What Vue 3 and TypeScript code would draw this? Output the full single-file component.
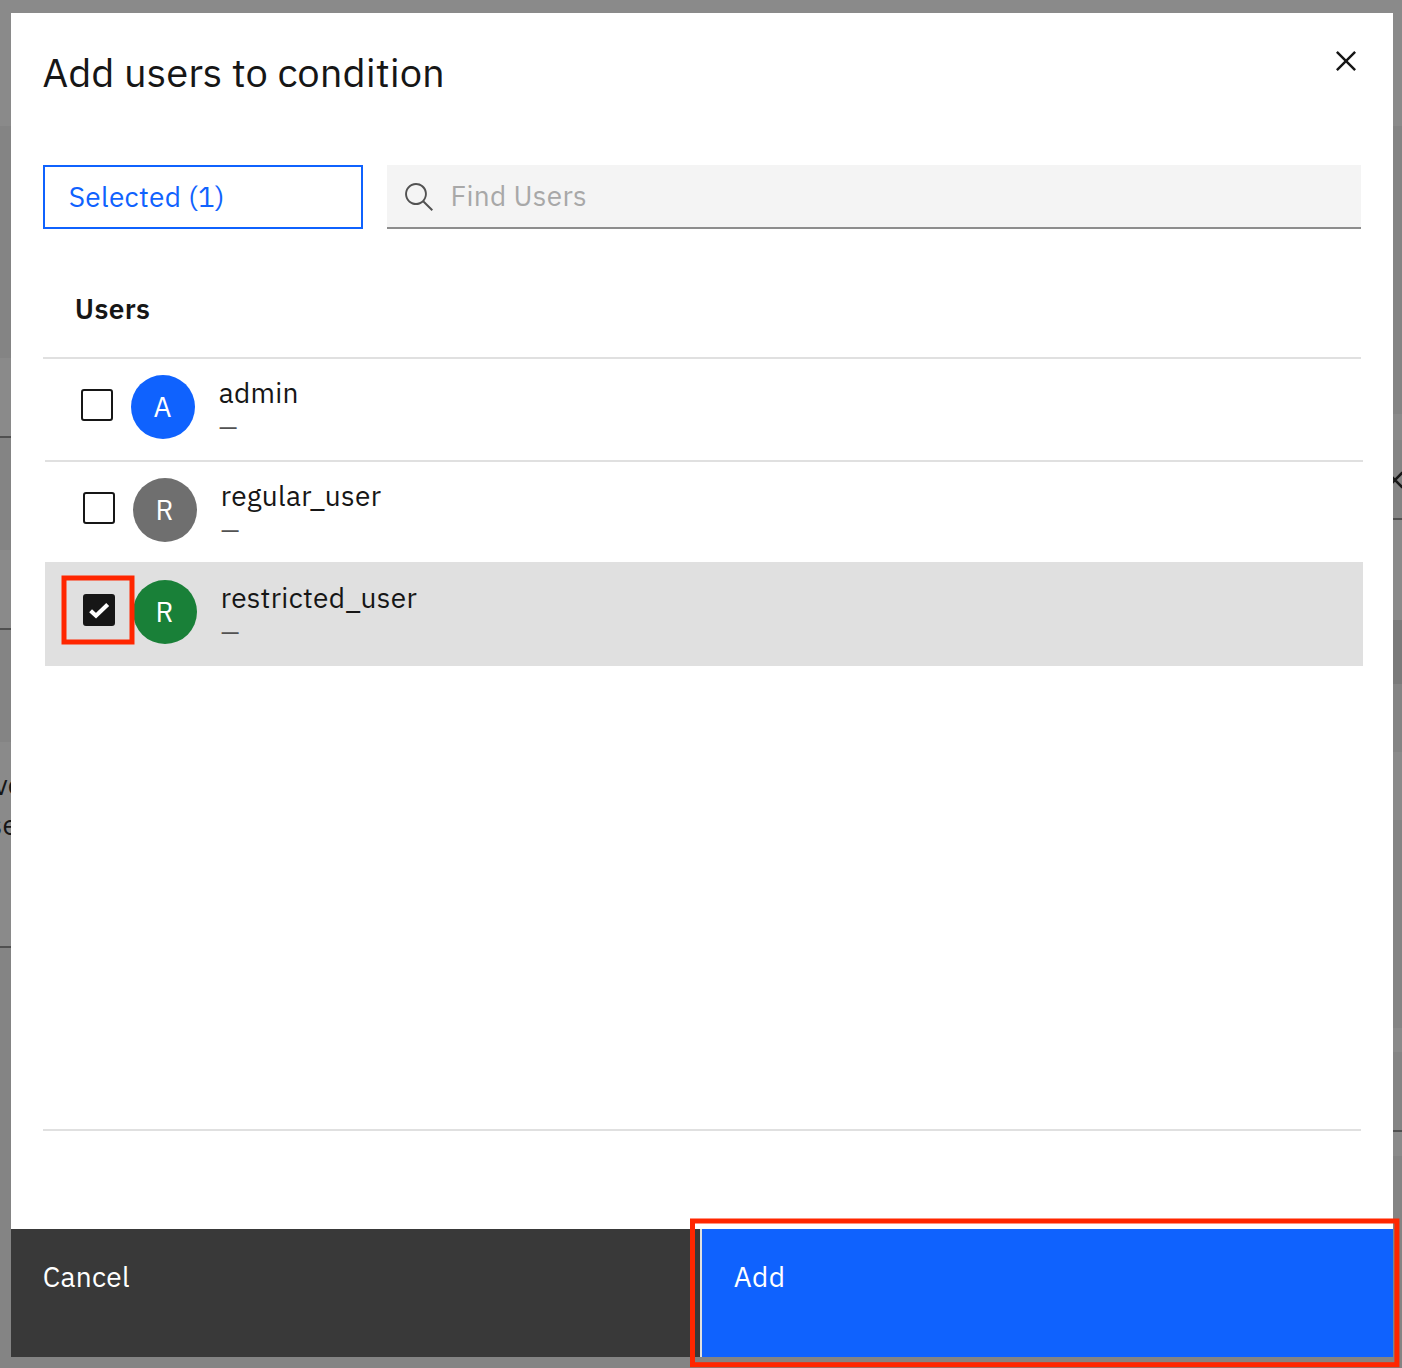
<script setup lang="ts">
import { ref, computed } from 'vue'

interface Strip { h: number; tone: 'light' | 'mid' | 'dark' | 'line'; words?: string[] }
interface User { name: string; initial: string; color: string; checked: boolean }

const leftStrips: Strip[] = [
  { h: 126, tone: 'light' }, { h: 232, tone: 'mid' }, { h: 78, tone: 'light' }, { h: 2, tone: 'line' },
  { h: 112, tone: 'mid' }, { h: 78, tone: 'light' }, { h: 2, tone: 'line' }, { h: 112, tone: 'mid' },
  { h: 204, tone: 'light', words: ['ve', 'se'] }, { h: 2, tone: 'line' }, { h: 420, tone: 'mid' },
]
const rightStrips: Strip[] = [
  { h: 126, tone: 'light' }, { h: 288, tone: 'mid' }, { h: 26, tone: 'light' }, { h: 78, tone: 'mid' },
  { h: 2, tone: 'line' }, { h: 100, tone: 'light' }, { h: 64, tone: 'dark' }, { h: 68, tone: 'mid' },
  { h: 68, tone: 'light' }, { h: 208, tone: 'mid' }, { h: 24, tone: 'light' }, { h: 78, tone: 'mid' },
  { h: 2, tone: 'line' }, { h: 24, tone: 'light' }, { h: 212, tone: 'mid' },
]

const users = ref<User[]>([
  { name: 'admin', initial: 'A', color: 'blue', checked: false },
  { name: 'regular_user', initial: 'R', color: 'gray', checked: false },
  { name: 'restricted_user', initial: 'R', color: 'green', checked: true },
])
const selectedCount = computed(() => users.value.filter((u) => u.checked).length)
const query = ref('')
</script>

<template>
  <div class="page">
    <div class="edge">
      <div v-for="(s, i) in leftStrips" :key="i" :class="['strip', s.tone]" :style="{ height: s.h + 'px' }">
        <div v-if="s.words" class="words"><span v-for="w in s.words" :key="w">{{ w }}</span></div>
      </div>
    </div>
    <div class="center">
      <section class="modal" role="dialog">
        <header class="header">
          <h2 class="title">Add users to condition</h2>
          <svg class="close" width="40" height="40" viewBox="0 0 32 32"><path d="M24 9.4 22.6 8 16 14.6 9.4 8 8 9.4 14.6 16 8 22.6 9.4 24 16 17.4 22.6 24 24 22.6 17.4 16z" /></svg>
        </header>
        <div class="tools">
          <button class="selected">Selected ({{ selectedCount }})</button>
          <label class="search">
            <svg width="32" height="32" viewBox="0 0 16 16"><path d="M15 14.3 10.7 10c1.9-2.3 1.6-5.8-.7-7.7S4.2.7 2.3 3 .7 8.8 3 10.7c2 1.7 5 1.7 7 0l4.3 4.3.7-.7zM2 6.5C2 4 4 2 6.5 2S11 4 11 6.5 9 11 6.5 11 2 9 2 6.5z" /></svg>
            <input v-model="query" placeholder="Find Users" />
          </label>
        </div>
        <div class="list">
          <div class="list-head">Users</div>
          <div v-for="u in users" :key="u.name" :class="['row', { checked: u.checked }]">
            <span class="box" @click="u.checked = !u.checked">
              <svg v-if="u.checked" width="32" height="32" viewBox="0 0 32 32"><path d="M7.6 16.7 13 21.7 24.7 10.5" /></svg>
            </span>
            <span :class="['avatar', u.color]">{{ u.initial }}</span>
            <span class="info"><span class="name">{{ u.name }}</span><span class="mail">—</span></span>
            <svg v-if="u.checked" class="mark mark-box" width="74" height="70"><rect x="3" y="3" width="68" height="64" /></svg>
          </div>
        </div>
        <footer class="footer">
          <button class="btn cancel">Cancel</button>
          <button class="btn add">Add<svg class="mark mark-add" width="712" height="150"><rect x="2.5" y="3" width="704.4" height="143.7" /></svg></button>
        </footer>
      </section>
    </div>
    <div class="edge">
      <div v-for="(s, i) in rightStrips" :key="i" :class="['strip', s.tone]" :style="{ height: s.h + 'px' }"></div>
      <svg class="bg-close" width="9" height="20" viewBox="0 0 9 20"><path d="M-6 2 9.5 17.5M9.5 2.5-6 18" /></svg>
    </div>
  </div>
</template>

<style>
body { margin: 0; overflow: hidden; }
</style>

<style scoped>
* { box-sizing: border-box; }
.page { display: flex; width: 1402px; height: 1368px; overflow: hidden; background: #848484; font-family: "IBM Plex Sans", "Open Sans", sans-serif; font-size: 28px; line-height: 36px; letter-spacing: 0.32px; color: #161616; }
.edge { position: relative; display: flex; flex-direction: column; flex: none; width: 11px; overflow: hidden; }
.edge:last-child { width: 9px; }
.strip { flex: none; }
.light { background: #8a8a8a; }
.mid { background: #848484; }
.dark { background: #7a7a7a; }
.line { background: #505050; }
.words { display: flex; flex-direction: column; align-items: flex-start; padding-top: 23px; line-height: 40px; margin-left: -6px; }
.words span + span { margin-left: -5.5px; }
.bg-close { position: absolute; left: 0; top: 470px; fill: none; stroke: #161616; stroke-width: 2.6; }
.center { position: relative; z-index: 1; display: flex; flex-direction: column; width: 1382px; flex: none; padding: 13px 0 11px; background: linear-gradient(#8a8a8a 13px, #848484 13px); }
.modal { display: flex; flex-direction: column; flex: 1; background: #fff; }
.header { display: flex; justify-content: space-between; height: 152px; padding: 28px 27px 0 32px; }
.title { margin: 5px 0 0 -0.5px; font-size: 40px; line-height: 52px; font-weight: 400; letter-spacing: 0; }
.close { fill: #161616; }
.tools { display: flex; gap: 24px; height: 64px; padding: 0 32px; }
.selected { width: 320px; padding: 0 23.7px; border: 2px solid #0f62fe; background: #fff; color: #0f62fe; font: inherit; text-align: left; letter-spacing: inherit; }
.search { display: flex; align-items: center; gap: 15.5px; flex: 1; padding-left: 16px; background: #f4f4f4; border-bottom: 2px solid #8d8d8d; }
.search svg { fill: #525252; flex: none; margin-top: 2px; }
.search input { flex: 1; border: 0; padding: 0; outline: 0; background: transparent; font: inherit; letter-spacing: inherit; color: #161616; }
.search input::placeholder { color: #a8a8a8; opacity: 1; }
.list { display: flex; flex-direction: column; height: 902px; margin: 0 32px; border-bottom: 2px solid #e0e0e0; }
.list-head { height: 130px; flex: none; padding: 62px 31.8px 0; font-weight: 600; border-bottom: 2px solid #e0e0e0; }
.row { position: relative; display: flex; height: 101px; flex: none; padding: 16px 0 0 38px; }
.row + .row { height: 102px; width: 1318px; margin-left: 2px; border-top: 2px solid #e0e0e0; }
.row + .row.checked { height: 104px; background: #e0e0e0; }
.box { width: 32px; height: 32px; margin-top: 14px; border: 2px solid #161616; border-radius: 3px; flex: none; }
.checked .box { background: #161616; }
.box svg { display: block; margin: -2px; fill: none; stroke: #fff; stroke-width: 4.2; }
.avatar { width: 64px; height: 64px; margin-left: 18px; border-radius: 50%; color: #fff; text-align: center; line-height: 64px; letter-spacing: 0; padding-right: 1px; flex: none; }
.blue { background: #0f62fe; }
.gray { background: #6f6f6f; }
.green { background: #198038; }
.info { display: flex; flex-direction: column; margin-left: 23.7px; }
.name { height: 36px; }
.mail { font-size: 24px; line-height: 32px; color: #525252; }
.mark { position: absolute; fill: none; stroke: #ff2600; stroke-width: 5; pointer-events: none; }
.mark-box { left: 16px; top: 11px; }
.footer { display: flex; gap: 2px; height: 128px; margin-top: auto; background: #e0e0e0; }
.btn { position: relative; border: 0; color: #fff; font: inherit; letter-spacing: inherit; text-align: left; padding: 30px 31.8px 0; display: flex; }
.cancel { width: 689px; background: #393939; }
.add { flex: 1; background: #0f62fe; }
.mark-add { left: -12px; top: -11px; }
</style>
